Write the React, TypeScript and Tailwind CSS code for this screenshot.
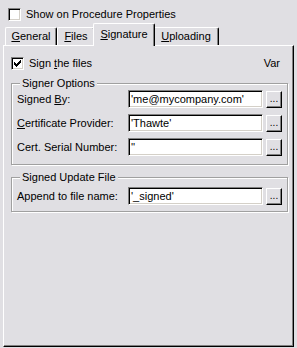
import React from "react";

function CheckBox({ checked }: { checked?: boolean }) {
  return (
    <div className="w-[13px] h-[13px] shrink-0 bg-white border border-t-[#808080] border-l-[#808080] border-b-white border-r-white shadow-[inset_1px_1px_0_#000,inset_-1px_-1px_0_#d4d0c8] flex items-center justify-center">
      {checked && (
        <svg width="7" height="7" viewBox="0 0 7 7">
          <path d="M0 2h1v1h1v1h1V3h1V2h1V1h1V0h1v3H6v1H5v1H4v1H3v1H2V6H1V5H0z" fill="#000" />
        </svg>
      )}
    </div>
  );
}

function Field({ value }: { value: string }) {
  return (
    <div className="flex items-center">
      <div className="w-[135px] h-[18px] bg-white border border-t-[#808080] border-l-[#808080] border-b-white border-r-white shadow-[inset_1px_1px_0_#000,inset_-1px_-1px_0_#d4d0c8] pl-[2px] flex items-center whitespace-nowrap overflow-hidden">
        {value}
      </div>
      <div className="ml-[3px] w-[16px] h-[17px] bg-[#e0dfe3] border border-t-white border-l-white border-b-black border-r-black shadow-[inset_-1px_-1px_0_#808080] flex items-end justify-center pb-[3px] text-[10px] leading-none">
        ...
      </div>
    </div>
  );
}

function Row({ label, value }: { label: React.ReactNode; value: string }) {
  return (
    <div className="flex items-center justify-between h-[18px]">
      <div>{label}</div>
      <Field value={value} />
    </div>
  );
}

function Group({ title, children }: { title: string; children: React.ReactNode }) {
  return (
    <div className="relative border border-[#a0a0a0] shadow-[inset_1px_1px_0_#fff,1px_1px_0_#fff]">
      <div className="absolute -top-[7px] left-[8px] px-[2px] bg-[#e0dfe3] leading-[13px]">{title}</div>
      {children}
    </div>
  );
}

export default function App() {
  const tabs = [
    { key: "G", rest: "eneral", w: "w-[52px]" },
    { key: "F", rest: "iles", w: "w-[38px]" },
    { key: "S", rest: "ignature", w: "w-[62px]", active: true },
    { key: "U", rest: "ploading", w: "w-[66px]" },
  ];
  return (
    <div className="w-[297px] h-[348px] bg-[#e0dfe3] font-['Liberation_Sans',Arial,sans-serif] text-[11px] text-black leading-none overflow-hidden">
      <div className="flex items-center pl-[8px] pt-[8px] gap-[5px]">
        <CheckBox />
        <span>Show on Procedure Properties</span>
      </div>

      <div className="flex items-end pl-[5px] mt-[2px] h-[23px] -mb-px relative z-10">
        {tabs.map((t) =>
          t.active ? (
            <div
              key={t.key}
              className={`${t.w} -mx-[2px] h-[23px] bg-[#e0dfe3] border-t border-l border-t-white border-l-white border-r border-r-black shadow-[inset_-1px_0_0_#808080] rounded-t-[2px] flex items-start justify-center pt-[5px] relative z-10`}
            >
              <span>
                <span className="underline">{t.key}</span>
                {t.rest}
              </span>
            </div>
          ) : (
            <div
              key={t.key}
              className={`${t.w} h-[18px] mb-px border-t border-l border-t-white border-l-white border-r border-r-black shadow-[inset_-1px_0_0_#808080] rounded-t-[2px] flex items-start justify-center pt-[3px]`}
            >
              <span>
                <span className="underline">{t.key}</span>
                {t.rest}
              </span>
            </div>
          )
        )}
      </div>

      <div className="ml-[3px] w-[291px] h-[302px] border border-t-white border-l-white border-r-black border-b-black shadow-[inset_-1px_-1px_0_#808080] pt-[10px] px-[7px]">
        <div className="flex items-center justify-between h-[14px]">
          <div className="flex items-center gap-[5px]">
            <CheckBox checked />
            <span>
              Sign <span className="underline">t</span>he files
            </span>
          </div>
          <span className="mr-[6px]">Var</span>
        </div>

        <div className="mt-[13px] w-[277px]">
          <Group title="Signer Options">
            <div className="flex flex-col gap-[6px] pt-[6px] pb-[8px] pl-[5px] pr-[5px]">
              <Row
                label={
                  <span>
                    Signed <span className="underline">B</span>y:
                  </span>
                }
                value="'me@mycompany.com'"
              />
              <Row
                label={
                  <span>
                    <span className="underline">C</span>ertificate Provider:
                  </span>
                }
                value="'Thawte'"
              />
              <Row label={<span>Cert. Serial Number:</span>} value="''" />
            </div>
          </Group>
        </div>

        <div className="mt-[12px] w-[277px]">
          <Group title="Signed Update File">
            <div className="pt-[9px] pb-[6px] pl-[5px] pr-[5px]">
              <Row label={<span>Append to file name:</span>} value="'_signed'" />
            </div>
          </Group>
        </div>
      </div>
    </div>
  );
}
